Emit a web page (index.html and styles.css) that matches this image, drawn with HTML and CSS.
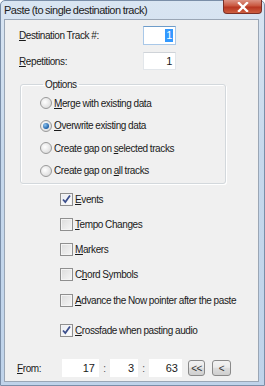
FILE: index.html
```html
<html>
	<head>
		<meta charset="utf-8">
		<title>Paste</title>
		<link rel="stylesheet" href="styles.css">
	</head>
	<body>
		<div id="win">
			<div class="titlebar">
				<span class="caption">Paste (to single destination track)</span>
				<span class="close">
					<svg width="12" height="10" viewBox="0 0 12 10"><path d="M2 1 L10 9 M10 1 L2 9" stroke="#fff" stroke-width="2.4" stroke-linecap="square"/></svg>
				</span>
			</div>
			<div class="client">
				<div class="row r1">
					<label class="lbl"><u>D</u>estination Track #:</label>
					<span class="edit focus"><span class="sel">1</span></span>
				</div>
				<div class="row r2">
					<label class="lbl"><u>R</u>epetitions:</label>
					<span class="edit">1</span>
				</div>
				<fieldset class="group">
					<legend>Options</legend>
					<div class="radio"><i class="dot"></i><span><u>M</u>erge with existing data</span></div>
					<div class="radio"><i class="dot on"></i><span><u>O</u>verwrite existing data</span></div>
					<div class="radio"><i class="dot"></i><span>Create gap on <u>s</u>elected tracks</span></div>
					<div class="radio"><i class="dot"></i><span>Create gap on <u>a</u>ll tracks</span></div>
				</fieldset>
				<div class="checks">
					<div class="check"><i class="box on"></i><span><u>E</u>vents</span></div>
					<div class="check"><i class="box"></i><span><u>T</u>empo Changes</span></div>
					<div class="check"><i class="box"></i><span><u>M</u>arkers</span></div>
					<div class="check"><i class="box"></i><span>C<u>h</u>ord Symbols</span></div>
					<div class="check adv"><i class="box"></i><span><u>A</u>dvance the Now pointer after the paste</span></div>
					<div class="check xf"><i class="box on"></i><span><u>C</u>rossfade when pasting audio</span></div>
				</div>
				<div class="from">
					<label class="lbl"><u>F</u>rom:</label>
					<span class="num n1">17</span>
					<span class="colon">:</span>
					<span class="num n2">3</span>
					<span class="colon">:</span>
					<span class="num n3">63</span>
					<button class="btn b1">&lt;&lt;</button>
					<button class="btn b2">&lt;</button>
				</div>
			</div>
		</div>
		<script>
			// check marks for the ticked boxes
			var tick = '<svg width="11" height="11" viewBox="0 0 11 11"><path d="M2 5.5 L4.3 8 L9 1.5" fill="none" stroke="#3c4f8c" stroke-width="1.8"/></svg>';
			var boxes = document.querySelectorAll('.box.on');
			for(var i=0;i<boxes.length;i++){
				boxes[i].innerHTML = tick;
			}
		</script>
	</body>
</html>
```
FILE: styles.css
```css
*{
	margin: 0px;
	padding: 0px;
	box-sizing: border-box;
}
body{
	width: 265px;
	height: 386px;
	overflow: hidden;
	font-family: "Liberation Sans", Arial, sans-serif;
	font-size: 10px;
	letter-spacing: -0.4px;
	word-spacing: -0.3px;
	color: #1a1a1a;
}
#win{
	width: 265px;
	height: 386px;
	display: flex;
	flex-direction: column;
	background: linear-gradient(#d9e5f2, #c6d8ec 40%, #bfd3ea);
	border: 1px solid #7a8ea8;
	border-radius: 5px 5px 0 0;
	padding: 0 5px 3px 3px;
}
.titlebar{
	height: 18px;
	display: flex;
	align-items: flex-start;
	justify-content: space-between;
}
.caption{
	padding-top: 3px;
	font-size: 11px;
	color: #222;
	letter-spacing: -0.5px;
	word-spacing: -0.5px;
}
.close{
	width: 39px;
	height: 14px;
	margin-top: -1px;
	margin-right: -3px;
	display: flex;
	align-items: center;
	justify-content: center;
	background: linear-gradient(#dc9384, #c9573f 45%, #b83621 55%, #cd5f40);
	border: 1px solid #7b3027;
	border-top: none;
	border-radius: 0 0 4px 4px;
}
.client{
	flex: 1;
	display: flex;
	flex-direction: column;
	background: #f0f0f0;
	border: 1px solid #9aa6b5;
}
.row{
	display: flex;
	align-items: center;
	padding-left: 14px;
}
.r1{
	margin-top: 6px;
	height: 19px;
}
.r2{
	margin-top: 7px;
	height: 18px;
}
.lbl{
	width: 124px;
}
.edit{
	width: 33px;
	height: 100%;
	display: flex;
	align-items: center;
	justify-content: flex-end;
	padding-right: 3px;
	background: #fff;
	border: 1px solid #e2e6ea;
	border-top-color: #cfd3d8;
	font-size: 11px;
}
.edit.focus{
	border-color: #a9c8e8;
	border-top-color: #6e9cc9;
	padding-right: 2px;
}
.sel{
	background: #3399ff;
	color: #fff;
	padding: 0 1px;
	line-height: 13px;
}
.group{
	margin: 8px 0 0 15px;
	width: 206px;
	border: 1px solid #d3d8dc;
	border-radius: 3px;
	box-shadow: inset 1px 1px 0 #fff, 1px 1px 0 #fff;
	padding: 0 0 1px 19px;
}
.group legend{
	margin-left: 3px;
	padding: 0 2px;
	line-height: 13px;
}
.radio{
	height: 22.5px;
	display: flex;
	align-items: center;
}
.radio:first-of-type{
	margin-top: 1px;
}
.dot{
	width: 12px;
	height: 12px;
	margin-right: 2px;
	border-radius: 50%;
	border: 1px solid #9a9a9a;
	background: radial-gradient(circle at 40% 40%, #fff, #e4e4e4 60%, #cfcfcf);
	display: flex;
	align-items: center;
	justify-content: center;
}
.dot.on::after{
	content: "";
	width: 6px;
	height: 6px;
	border-radius: 50%;
	background: radial-gradient(circle at 35% 35%, #8cc3f0, #1d5fa6 70%);
}
.checks{
	padding-left: 55px;
	margin-top: 3px;
}
.check{
	height: 25px;
	display: flex;
	align-items: center;
}
.adv{
	margin-top: 1px;
}
.xf{
	margin-top: 5px;
}
.box{
	width: 13px;
	height: 13px;
	margin-right: 2px;
	border: 1px solid #8f8f8f;
	background: linear-gradient(135deg, #dcdcdc, #f6f6f6);
	box-shadow: inset 0 0 0 1px #f4f4f4;
}
.box.on{
	background: linear-gradient(135deg, #e7eaf0, #ffffff);
}
.box svg{
	display: block;
}
.from{
	margin-top: 16px;
	height: 18px;
	display: flex;
	align-items: center;
	padding-left: 12px;
}
.from .lbl{
	width: 45px;
}
.num{
	height: 100%;
	display: flex;
	align-items: center;
	justify-content: flex-end;
	padding-right: 4px;
	background: #fff;
	font-size: 11px;
	letter-spacing: 0;
}
.n1{
	width: 37px;
}
.n2{
	width: 28px;
}
.n3{
	width: 33px;
}
.colon{
	width: 11px;
	text-align: center;
	color: #555;
}
.n3 + .btn{
	margin-left: 6px;
}
.btn{
	height: 16px;
	border: 1px solid #8a8a8a;
	border-radius: 3px;
	background: linear-gradient(#f2f2f2, #ebebeb 45%, #dddddd 50%, #cfcfcf);
	font-family: "Liberation Sans", Arial, sans-serif;
	font-size: 10px;
	letter-spacing: -0.5px;
	color: #333;
}
.b1{
	width: 17px;
}
.b2{
	width: 19px;
	margin-left: 7px;
}
```
